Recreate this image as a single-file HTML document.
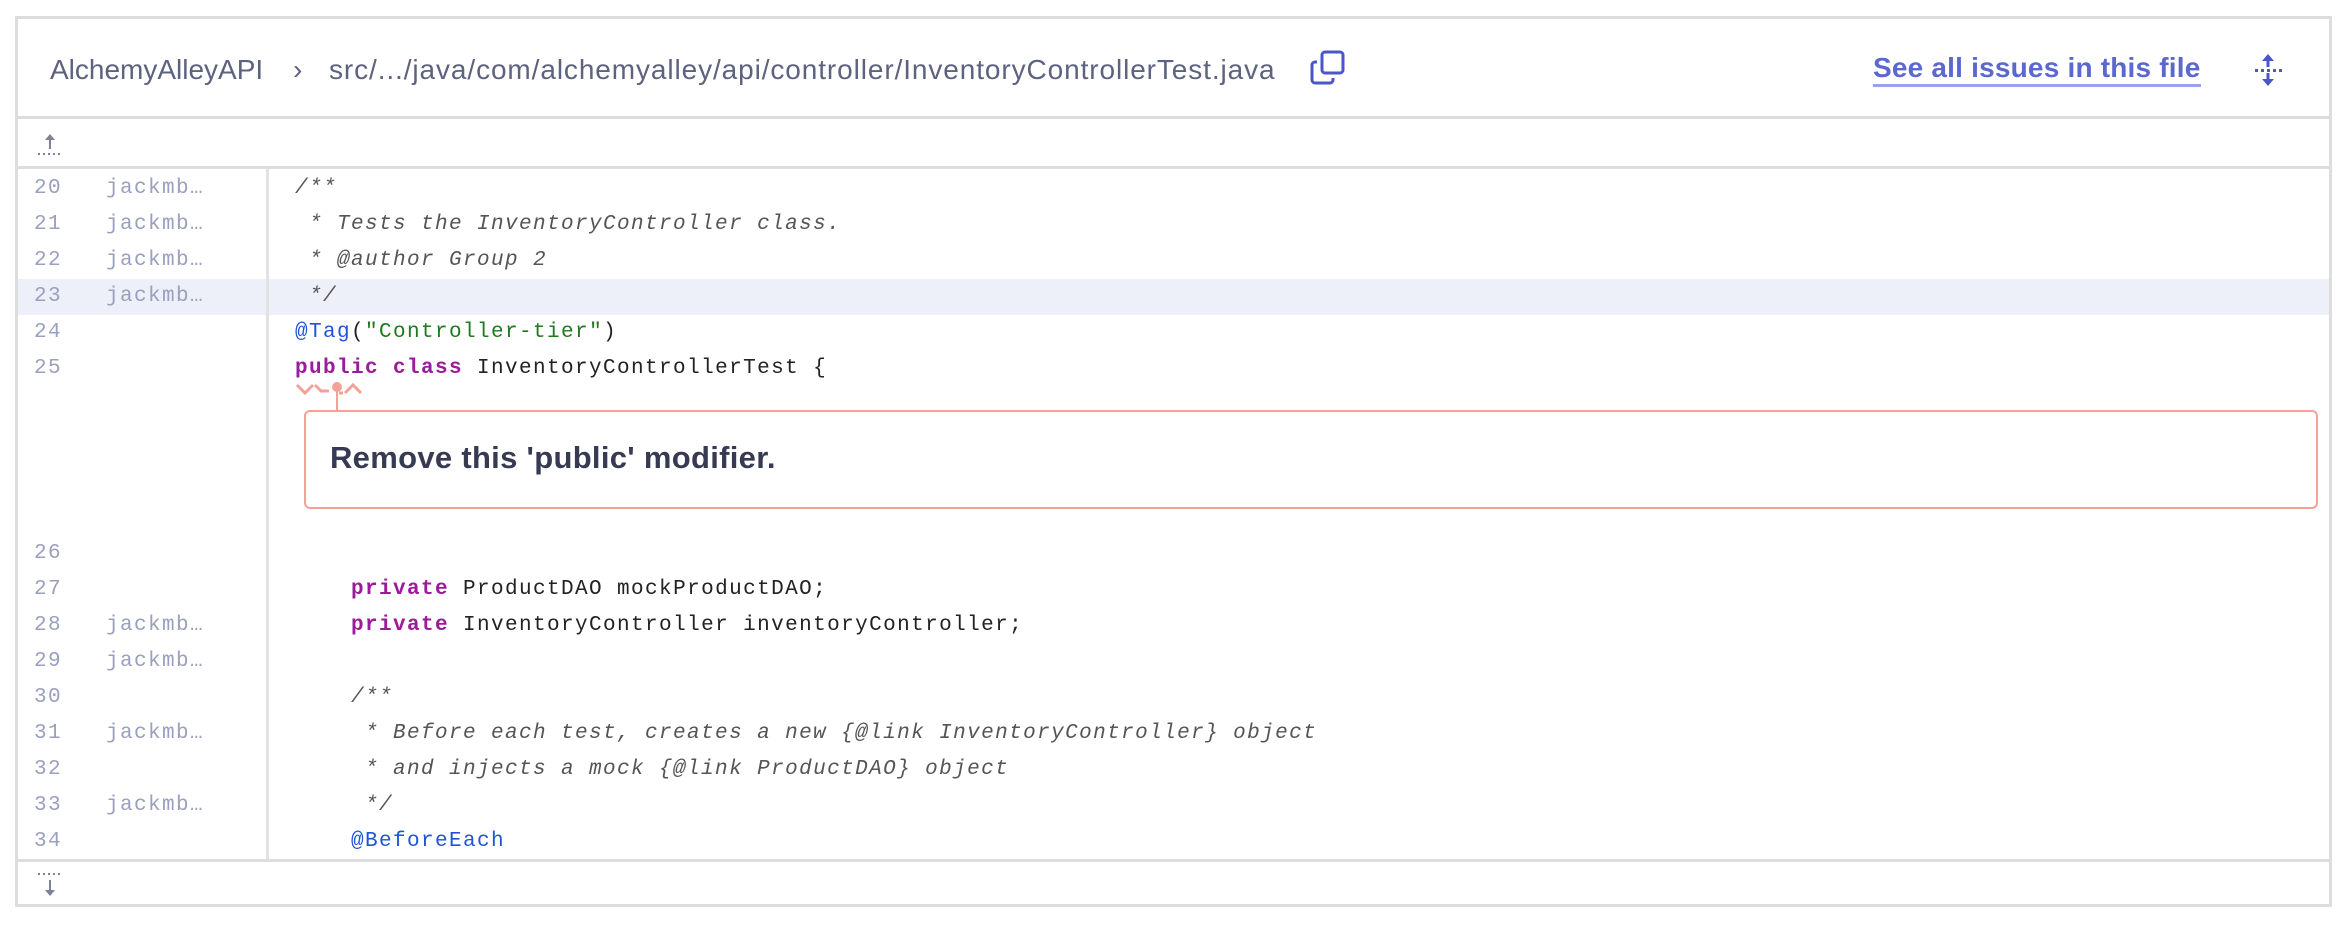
<!DOCTYPE html>
<html><head><meta charset="utf-8"><style>
*{margin:0;padding:0;box-sizing:border-box}
body{width:2348px;height:926px;background:#fff;position:relative;overflow:hidden;font-family:"Liberation Sans",sans-serif}
.box{position:absolute;left:15px;top:16px;width:2317px;height:891px;border:3px solid #dddddd}
.hdr{position:absolute;left:0;top:0;right:0;height:100px;border-bottom:3px solid #dddddd}
.crumb{position:absolute;top:35px;font-size:28px;color:#5d637f;white-space:nowrap}
.link{position:absolute;left:1855px;top:33px;font-size:28px;color:#5b68cf;font-weight:bold;letter-spacing:0.2px;border-bottom:3px solid #98a3ec;padding-bottom:0px;white-space:nowrap}
.exp{position:absolute;left:0;right:0;top:100px;height:50px;border-bottom:3px solid #dddddd}
.gut{position:absolute;left:248px;top:150px;width:3px;height:690px;background:#e2e2e2}
.row{position:absolute;left:0;right:0;height:36px;font-family:"Liberation Mono",monospace;font-size:21px;letter-spacing:1.4px;line-height:36px;white-space:pre}
.ln{position:absolute;left:16px;color:#9aa0bd}
.au{position:absolute;left:88px;color:#9aa0bd}
.cd{position:absolute;left:277px;color:#222}
.k{color:#9c1b9c;font-weight:bold}
.a{color:#1f54d6}
.s{color:#1f7a1f}
.c{color:#555;font-style:italic}
.hl{background:#edf0f8}
.foot{position:absolute;left:0;right:0;top:840px;height:48px;border-top:3px solid #dddddd}
.issue{position:absolute;left:286px;top:391px;width:2014px;height:99px;border:2px solid #f5a197;border-radius:6px}
.issue span{position:absolute;left:24px;top:28px;font-size:31px;font-weight:bold;color:#363a52;letter-spacing:0.3px}
</style></head><body>
<div class="box">
 <div class="hdr">
  <div class="crumb" style="left:32px">AlchemyAlleyAPI</div>
  <div class="crumb" style="left:275px">›</div>
  <div class="crumb" style="left:311px;letter-spacing:0.9px">src/.../java/com/alchemyalley/api/controller/InventoryControllerTest.java</div>
  <svg style="position:absolute;left:1292px;top:31px" width="36" height="36" viewBox="0 0 36 36" fill="none" stroke="#4a57c4" stroke-width="3"><rect x="12" y="2" width="21" height="21" rx="3"/><path d="M7 12h-2a3 3 0 0 0-3 3v15a3 3 0 0 0 3 3h15a3 3 0 0 0 3-3v-2"/></svg>
  <div class="link">See all issues in this file</div>
  <svg style="position:absolute;left:2235px;top:34px" width="30" height="34" viewBox="0 0 30 34" fill="#4a57c4"><path d="M15 1l-6 7h12z"/><rect x="13.5" y="7" width="3" height="7"/><path d="M15 33l-6-7h12z"/><rect x="13.5" y="20" width="3" height="7"/><rect x="2" y="16" width="3" height="3"/><rect x="8" y="16" width="3" height="3"/><rect x="14" y="16" width="3" height="3"/><rect x="20" y="16" width="3" height="3"/><rect x="26" y="16" width="3" height="3"/></svg>
 </div>
 <div class="exp">
  <svg style="position:absolute;left:18px;top:14px" width="28" height="24" viewBox="0 0 28 24" fill="#7d8299"><path d="M14 1l-5 6h10z"/><rect x="13" y="6" width="2" height="10"/><rect x="2" y="20" width="2" height="2"/><rect x="7" y="20" width="2" height="2"/><rect x="12" y="20" width="2" height="2"/><rect x="17" y="20" width="2" height="2"/><rect x="22" y="20" width="2" height="2"/></svg>
 </div>

 <div class="row" style="top:152px"><span class="ln">20</span><span class="au">jackmb…</span><span class="cd c">/**</span></div>
 <div class="row" style="top:188px"><span class="ln">21</span><span class="au">jackmb…</span><span class="cd c"> * Tests the InventoryController class.</span></div>
 <div class="row" style="top:224px"><span class="ln">22</span><span class="au">jackmb…</span><span class="cd c"> * @author Group 2</span></div>
 <div class="row hl" style="top:260px"><span class="ln">23</span><span class="au">jackmb…</span><span class="cd c"> */</span></div>
 <div class="row" style="top:296px"><span class="ln">24</span><span class="cd"><span class="a">@Tag</span>(<span class="s">"Controller-tier"</span>)</span></div>
 <div class="row" style="top:332px"><span class="ln">25</span><span class="cd"><span class="k">public class</span> InventoryControllerTest {</span></div>
 <div class="gut"></div>

 <svg style="position:absolute;left:277px;top:360px" width="90" height="32" viewBox="0 0 90 32" fill="none" stroke="#f5a197" stroke-width="3"><path d="M2 6l8 8 8-8M50 14l8-8 8 8"/><circle cx="42" cy="8" r="3.5" fill="#f5a197"/><path d="M42 8v24" stroke-width="2"/><path d="M20 6l6 6 8 0M48 14l-4 0"/></svg>
 <div class="issue"><span>Remove this 'public' modifier.</span></div>

 <div class="row" style="top:517px"><span class="ln">26</span></div>
 <div class="row" style="top:553px"><span class="ln">27</span><span class="cd">    <span class="k">private</span> ProductDAO mockProductDAO;</span></div>
 <div class="row" style="top:589px"><span class="ln">28</span><span class="au">jackmb…</span><span class="cd">    <span class="k">private</span> InventoryController inventoryController;</span></div>
 <div class="row" style="top:625px"><span class="ln">29</span><span class="au">jackmb…</span></div>
 <div class="row" style="top:661px"><span class="ln">30</span><span class="cd c">    /**</span></div>
 <div class="row" style="top:697px"><span class="ln">31</span><span class="au">jackmb…</span><span class="cd c">     * Before each test, creates a new {@link InventoryController} object</span></div>
 <div class="row" style="top:733px"><span class="ln">32</span><span class="cd c">     * and injects a mock {@link ProductDAO} object</span></div>
 <div class="row" style="top:769px"><span class="ln">33</span><span class="au">jackmb…</span><span class="cd c">     */</span></div>
 <div class="row" style="top:805px"><span class="ln">34</span><span class="cd">    <span class="a">@BeforeEach</span></span></div>

 <div class="foot">
  <svg style="position:absolute;left:18px;top:10px" width="28" height="26" viewBox="0 0 28 26" fill="#7d8299"><rect x="2" y="1" width="2" height="2"/><rect x="7" y="1" width="2" height="2"/><rect x="12" y="1" width="2" height="2"/><rect x="17" y="1" width="2" height="2"/><rect x="22" y="1" width="2" height="2"/><rect x="13" y="8" width="2" height="10"/><path d="M14 24l-5-6h10z"/></svg>
 </div>
</div>
</body></html>
